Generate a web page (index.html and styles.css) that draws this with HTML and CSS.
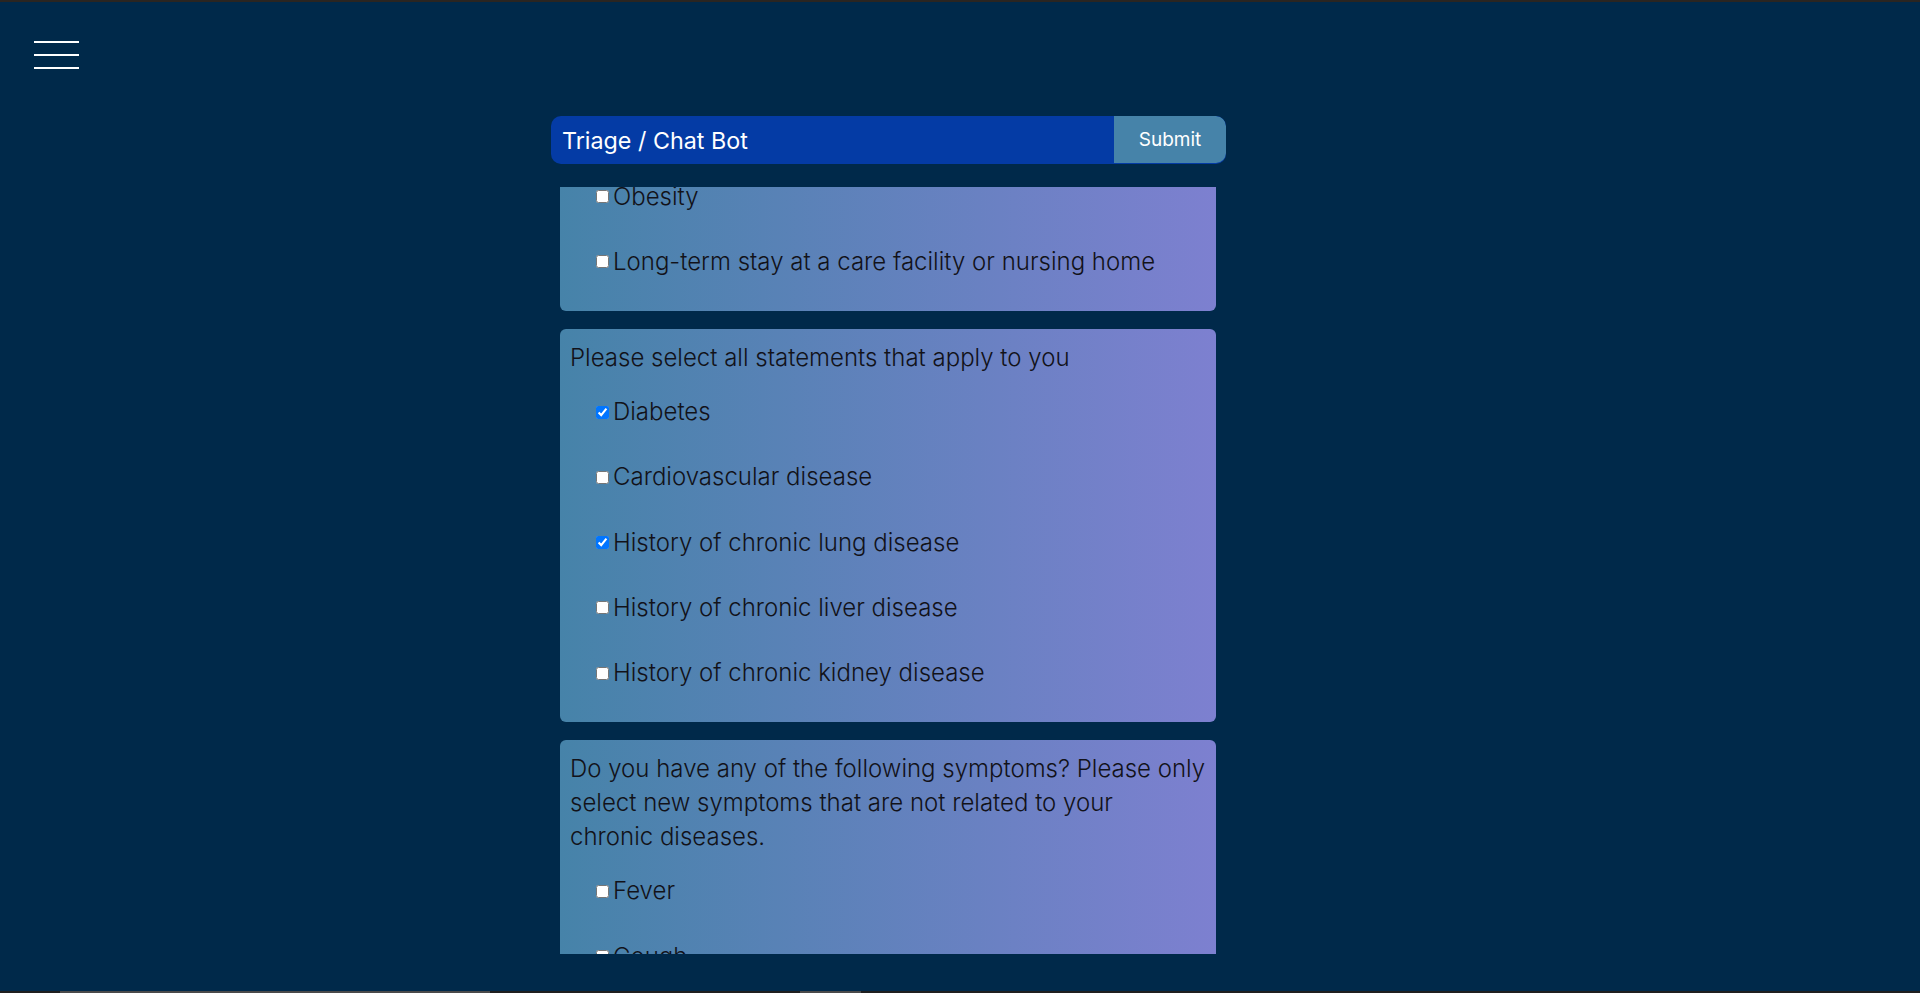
FILE: index.html
```html
<!DOCTYPE html>
<html lang="en">
<head>
<meta charset="utf-8">
<title>Triage / Chat Bot</title>
<link rel="stylesheet" href="styles.css">
</head>
<body>
<div class="topline"></div>
<nav class="topnav">
  <button class="menu-btn" aria-label="Menu"><span></span><span></span><span></span></button>
</nav>
<main class="main">
  <div class="chat-header">
    <div class="chat-title">Triage / Chat Bot</div>
    <button class="submit">Submit</button>
  </div>
  <div class="scroll">
    <section class="card card-first">
      <label class="item"><input type="checkbox"><span>Obesity</span></label>
      <label class="item"><input type="checkbox"><span>Long-term stay at a care facility or nursing home</span></label>
    </section>
    <section class="card">
      <p class="question">Please select all statements that apply to you</p>
      <label class="item"><input type="checkbox" checked><span>Diabetes</span></label>
      <label class="item"><input type="checkbox"><span>Cardiovascular disease</span></label>
      <label class="item"><input type="checkbox" checked><span>History of chronic lung disease</span></label>
      <label class="item"><input type="checkbox"><span>History of chronic liver disease</span></label>
      <label class="item"><input type="checkbox"><span>History of chronic kidney disease</span></label>
    </section>
    <section class="card">
      <p class="question">Do you have any of the following symptoms? Please only select new symptoms that are not related to your <span class="nowrap">chronic diseases.</span></p>
      <label class="item"><input type="checkbox"><span>Fever</span></label>
      <label class="item"><input type="checkbox"><span>Cough</span></label>
      <label class="item"><input type="checkbox"><span>Shortness of breath</span></label>
    </section>
  </div>
</main>
<div class="spacer"></div>
<div class="bottombar"><span class="seg seg-a"></span><span class="seg seg-b"></span></div>
</body>
</html>
```
FILE: styles.css
```css
html, body {
  margin: 0;
  padding: 0;
}
body {
  background: #00294a;
  height: 100vh;
  overflow: hidden;
  display: flex;
  flex-direction: column;
  font-family: Inter, "Open Sans", sans-serif;
  font-size: 24px;
  color: #121219;
}
.topline {
  height: 2px;
  background: #2a2521;
  flex: none;
}
.topnav {
  height: 114px;
  flex: none;
  box-sizing: border-box;
  padding: 39px 0 0 34px;
}
.menu-btn {
  display: flex;
  flex-direction: column;
  gap: 11px;
  background: none;
  border: 0;
  padding: 0;
  cursor: pointer;
}
.menu-btn span {
  display: block;
  width: 45px;
  height: 2px;
  background: #ffffff;
}
.main {
  margin-left: 551px;
  width: 675px;
  flex: none;
}
.chat-header {
  height: 48px;
  display: flex;
  align-items: stretch;
  background: #043ba5;
  border-radius: 10px;
  overflow: hidden;
}
.chat-title {
  flex: 1;
  display: flex;
  align-items: center;
  padding-left: 11px;
  color: #ffffff;
  font-size: 23.3px;
  font-weight: 400;
}
.submit {
  width: 112px;
  height: 47px;
  border: 0;
  background: #4683a9;
  color: #ffffff;
  font-family: Inter, "Open Sans", sans-serif;
  font-size: 19px;
  font-weight: 400;
  border-radius: 0 10px 10px 0;
  padding: 0;
}
.scroll {
  margin-top: 23px;
  height: 767px;
  overflow: hidden;
  padding: 0 10px 0 9px;
}
.card {
  background: linear-gradient(to right, #4683a9, #7d80d0);
  border-radius: 6px;
  padding: 12px 10px 16.4px;
  margin-bottom: 18.5px;
}
.card-first {
  margin-top: -35px;
}
.question {
  margin: 0 0 4.4px;
  line-height: 34px;
  font-weight: 300;
}
.nowrap {
  white-space: nowrap;
}
.item {
  display: flex;
  align-items: center;
  padding: 15.6px 0 15.6px 22px;
  line-height: 34px;
  font-weight: 300;
}
.item input {
  width: 13px;
  height: 13px;
  margin: 0 4px 0 4px;
  flex: none;
}
.spacer {
  flex: 1;
}
.bottombar {
  height: 2px;
  background: #1f1f1f;
  flex: none;
  position: relative;
}
.seg {
  position: absolute;
  top: 0;
  height: 2px;
  background: #4a4a4a;
}
.seg-a { left: 60px; width: 430px; }
.seg-b { left: 800px; width: 61px; }
```
